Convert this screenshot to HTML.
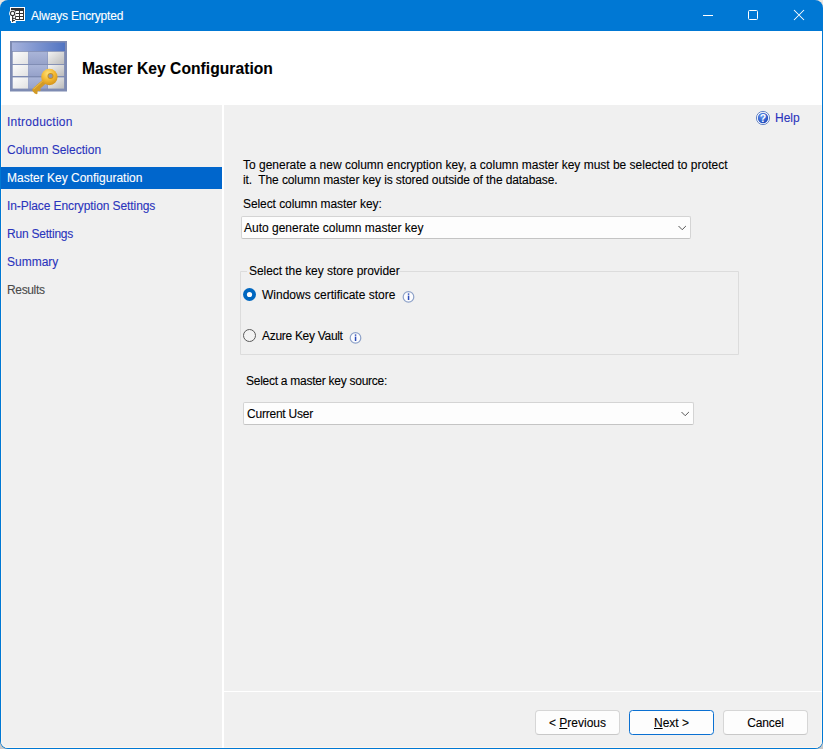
<!DOCTYPE html>
<html><head><meta charset="utf-8">
<style>
*{margin:0;padding:0;box-sizing:border-box}
html,body{width:823px;height:749px;overflow:hidden;background:linear-gradient(#ebe6e1 0,#ebe6e1 50%,#c8c8c8 50%)}
body{font-family:"Liberation Sans",sans-serif;font-size:12px;color:#000;position:relative;-webkit-text-stroke:0.1px currentColor}
.a{position:absolute;white-space:pre;line-height:14px}
#win{position:absolute;left:0;top:0;width:823px;height:749px;background:#0078d4;border-radius:8px;overflow:hidden}
#inner{position:absolute;left:1px;top:31px;width:821px;height:717px;background:#f0f0f0;border-radius:0 0 7px 7px;overflow:hidden;box-shadow:inset 0 -1px 0 #fdf6ee, inset 1px 0 0 #fdf6ee, inset -1px 0 0 #fdf6ee}
#hdr{position:absolute;left:0;top:0;width:821px;height:74px;background:#fff}
#gap{position:absolute;left:221px;top:74px;width:2px;height:643px;background:#fff}
#sep{position:absolute;left:223px;top:660px;width:598px;height:1px;background:#fff}
.nav{position:absolute;left:7px;color:#2a34bc;font-size:12px;white-space:pre;line-height:14px}
#sel{position:absolute;left:1px;top:167px;width:221px;height:22px;background:#0066cc}
.dd{position:absolute;background:#fdfdfd;border:1px solid #d4d4d4;border-bottom-color:#c4c4c4;border-radius:2px}
.btn{position:absolute;background:#fdfdfd;border:1px solid #d6d6d6;border-bottom-color:#c8c8c8;border-radius:4px;text-align:center;font-size:12px;line-height:24px;white-space:pre}
svg{position:absolute;overflow:visible}
</style></head><body>
<div id="win">
  <div id="inner">
    <div id="hdr"></div>
    <div id="gap"></div>
    <div id="sep"></div>
  </div>
</div>
<!-- title bar icon -->
<svg style="left:0;top:0" width="40" height="31" viewBox="0 0 40 31">
  <rect x="10" y="7" width="15" height="14" fill="#fff"/>
  <rect x="11" y="8" width="13" height="12" fill="#333"/>
  <g fill="#fff">
    <rect x="16" y="11" width="3" height="2"/><rect x="20" y="11" width="3" height="2"/>
    <rect x="16" y="14" width="3" height="2"/><rect x="20" y="14" width="3" height="2"/>
    <rect x="16" y="17" width="3" height="2"/><rect x="20" y="17" width="3" height="2"/>
  </g>
  <circle cx="12.6" cy="13.4" r="3.4" fill="#fff"/>
  <rect x="11" y="15.5" width="4.8" height="7.5" fill="#fff"/>
  <circle cx="12.6" cy="13.4" r="2.1" fill="#fff" stroke="#333" stroke-width="1.1"/>
  <rect x="12.1" y="15.6" width="1.1" height="6.4" fill="#333"/>
  <rect x="12.1" y="17.9" width="2.8" height="1" fill="#333"/>
  <rect x="12.1" y="20" width="2.8" height="1" fill="#333"/>
  <rect x="15.2" y="16" width="0.8" height="4" fill="#333"/>
</svg>
<div class="a" style="left:31px;top:9px;color:#fff;font-size:12px;letter-spacing:-0.2px">Always Encrypted</div>
<!-- window controls -->
<svg style="left:0;top:0" width="823" height="31">
  <rect x="703" y="15" width="10" height="1" fill="#fff"/>
  <rect x="748.5" y="10.5" width="9" height="9" rx="1" fill="none" stroke="#fff" stroke-width="1"/>
  <path d="M794 10 L804 20 M804 10 L794 20" stroke="#fff" stroke-width="1.05" fill="none"/>
</svg>
<!-- header icon -->
<svg style="left:0;top:0" width="80" height="100">
  <defs>
    <linearGradient id="hb" x1="0" x2="1" y1="0" y2="0"><stop offset="0" stop-color="#a6b2dc"/><stop offset="1" stop-color="#5174c2"/></linearGradient>
    <linearGradient id="c1" x1="0" x2="1" y1="0" y2="1"><stop offset="0" stop-color="#fcfcfc"/><stop offset="1" stop-color="#e2e2e2"/></linearGradient>
    <linearGradient id="c2" x1="0" x2="0" y1="0" y2="1"><stop offset="0" stop-color="#aab5d8"/><stop offset="1" stop-color="#96a2ca"/></linearGradient>
    <linearGradient id="c3" x1="0" x2="1" y1="0" y2="1"><stop offset="0" stop-color="#f2f2f2"/><stop offset="1" stop-color="#bcbcbc"/></linearGradient>
    <radialGradient id="kg" cx="0.42" cy="0.3" r="0.75"><stop offset="0" stop-color="#ffe27a"/><stop offset="0.55" stop-color="#f2b630"/><stop offset="1" stop-color="#cf8f18"/></radialGradient>
  </defs>
  <rect x="10" y="41" width="57" height="50.5" fill="#7e8bb2"/>
  <rect x="12" y="42.5" width="53" height="8.5" fill="url(#hb)"/>
  <rect x="12.7" y="51.8" width="15.5" height="12.3" fill="url(#c1)"/>
  <rect x="12.7" y="65" width="15.5" height="11" fill="url(#c1)"/>
  <rect x="12.7" y="77.4" width="15.5" height="11.2" fill="url(#c1)"/>
  <rect x="28.4" y="51.8" width="19.2" height="12.3" fill="url(#c2)"/>
  <rect x="28.4" y="65" width="19.2" height="11" fill="url(#c2)"/>
  <rect x="28.4" y="77.4" width="19.2" height="11.2" fill="url(#c2)"/>
  <rect x="48" y="51.8" width="16.1" height="12.3" fill="url(#c3)"/>
  <rect x="48" y="65" width="16.1" height="11" fill="url(#c3)"/>
  <rect x="48" y="77.4" width="16.1" height="11.2" fill="url(#c3)"/>
  <!-- key -->
  <g transform="translate(49.4,77) rotate(138)">
    <path d="M5 2.5 L20 2.5 Q22 2.5 22 0.5 L22 -2.5 L21 -4.2 L19.5 -4.2 L18.8 -2.8 L17.5 -2.8 L16.8 -4 L15.2 -4 L14.5 -2.5 L5 -2.5 Z" fill="#d29a26"/>
    <path d="M6 1.6 L20 1.6" stroke="#e8b848" stroke-width="1"/>
  </g>
  <circle cx="49.4" cy="77" r="8.2" fill="url(#kg)"/>
  <circle cx="50.5" cy="76" r="3" fill="#c99020"/>
  <circle cx="50.5" cy="76" r="2.1" fill="#8c96b4"/>
</svg>
<div class="a" style="left:82px;top:60px;font-size:15.6px;font-weight:bold;line-height:18px;letter-spacing:0.05px">Master Key Configuration</div>
<!-- nav -->
<div id="sel"></div>
<div class="nav" style="top:115px;letter-spacing:0.25px">Introduction</div>
<div class="nav" style="top:143px">Column Selection</div>
<div class="nav" style="top:171px;color:#fff">Master Key Configuration</div>
<div class="nav" style="top:199px;letter-spacing:-0.09px">In-Place Encryption Settings</div>
<div class="nav" style="top:227px;letter-spacing:-0.22px">Run Settings</div>
<div class="nav" style="top:255px">Summary</div>
<div class="nav" style="top:283px;color:#4a4a4a;letter-spacing:-0.35px">Results</div>
<!-- help -->
<svg style="left:0;top:0" width="823" height="140">
  <defs><radialGradient id="hg" cx="0.4" cy="0.35" r="0.7"><stop offset="0" stop-color="#6a9af0"/><stop offset="1" stop-color="#1a44b8"/></radialGradient></defs>
  <circle cx="763" cy="118" r="6.6" fill="#fff" stroke="#5577c0" stroke-width="0.9"/>
  <circle cx="763" cy="118" r="5.2" fill="url(#hg)"/>
  <text x="763" y="122" font-family="Liberation Sans" font-weight="bold" font-size="10.5" fill="#fff" text-anchor="middle">?</text>
</svg>
<div class="a" style="left:775px;top:111px;color:#2a34bc">Help</div>
<!-- content -->
<div class="a" style="left:243px;top:158px;line-height:15px;letter-spacing:-0.01px">To generate a new column encryption key, a column master key must be selected to protect</div>
<div class="a" style="left:243px;top:173px;line-height:15px;letter-spacing:-0.1px">it.  The column master key is stored outside of the database.</div>
<div class="a" style="left:243px;top:197px;letter-spacing:-0.08px">Select column master key:</div>
<div class="dd" style="left:241px;top:216px;width:450px;height:23px"></div>
<svg style="left:0;top:0" width="823" height="430">
  <path d="M678.5 226 L682.2 229.7 L685.9 226" fill="none" stroke="#555" stroke-width="1"/>
  <path d="M681.5 412 L685.2 415.7 L688.9 412" fill="none" stroke="#555" stroke-width="1"/>
</svg>
<div class="a" style="left:244px;top:221px">Auto generate column master key</div>

<!-- group box -->
<svg style="left:0;top:0" width="823" height="400">
  <path d="M247 271.5 H240.5 V354.5 H738.5 V271.5 H399.5" fill="none" stroke="#dcdcdc" stroke-width="1"/>
  <circle cx="249.5" cy="294.5" r="6.5" fill="#0067c0"/>
  <circle cx="249.5" cy="294.5" r="2.6" fill="#fff"/>
  <circle cx="249.5" cy="335.5" r="6" fill="#f3f3f3" stroke="#5a5a5a" stroke-width="1"/>
  <g>
    <circle cx="408.5" cy="296.9" r="5.3" fill="#fcfcfe" stroke="#8ea2c8" stroke-width="1.2"/>
    <rect x="407.8" y="293.4" width="1.5" height="1.4" fill="#2a4ab8"/>
    <rect x="407.8" y="295.6" width="1.5" height="4.4" fill="#2a4ab8"/>
  </g>
  <g>
    <circle cx="355.5" cy="337.9" r="5.3" fill="#fcfcfe" stroke="#8ea2c8" stroke-width="1.2"/>
    <rect x="354.8" y="334.4" width="1.5" height="1.4" fill="#2a4ab8"/>
    <rect x="354.8" y="336.6" width="1.5" height="4.4" fill="#2a4ab8"/>
  </g>
</svg>
<div class="a" style="left:249px;top:264px;letter-spacing:-0.05px">Select the key store provider</div>
<div class="a" style="left:262px;top:288px">Windows certificate store</div>
<div class="a" style="left:262px;top:329px;letter-spacing:-0.3px">Azure Key Vault</div>

<div class="a" style="left:246px;top:374px;letter-spacing:-0.26px">Select a master key source:</div>
<div class="dd" style="left:243px;top:402px;width:451px;height:23px"></div>
<svg style="left:0;top:0" width="823" height="430">
  <path d="M681.5 412 L685.2 415.7 L688.9 412" fill="none" stroke="#555" stroke-width="1"/>
</svg>
<div class="a" style="left:247px;top:407px;letter-spacing:-0.22px">Current User</div>

<div class="btn" style="left:535px;top:710px;width:85px;height:25px">&lt; <u>P</u>revious</div>
<div class="btn" style="left:629px;top:710px;width:85px;height:25px;border-color:#0a70d2;border-radius:3.5px"><u>N</u>ext &gt;</div>
<div class="btn" style="left:723px;top:710px;width:85px;height:25px;letter-spacing:-0.15px">Cancel</div>
</body></html>
